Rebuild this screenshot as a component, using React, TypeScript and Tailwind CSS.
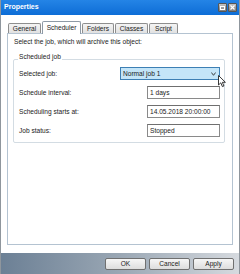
import React from "react";

const font = { fontFamily: '"Liberation Sans", Arial, sans-serif' };

function Tab({ label, w, selected }: { label: string; w: string; selected?: boolean }) {
  if (selected) {
    return (
      <div
        className={`${w} h-[13px] -mb-px relative bg-white border-t border-x border-[#8e9aa6] rounded-t-[2px] flex items-center justify-center text-[6.6px] text-[#1a1a1a]`}
      >
        <span className="-mt-px">{label}</span>
      </div>
    );
  }
  return (
    <div
      className={`${w} h-[10px] bg-gradient-to-b from-[#f4f4f4] to-[#e1e1e1] border-t border-x border-[#8e8e8e] rounded-t-[2px] flex items-center justify-center text-[6.6px] text-[#1a1a1a]`}
    >
      {label}
    </div>
  );
}

function TextBox({ value }: { value: string }) {
  return (
    <div className="w-[73px] h-[13px] border border-[#8a8a8a] border-t-[#6f6f6f] bg-white flex items-center pl-[2px] text-[6.6px] text-[#1a1a1a]">
      {value}
    </div>
  );
}

function Row({ label, children }: { label: string; children: React.ReactNode }) {
  return (
    <div className="h-[13px] flex items-center justify-between">
      <span className="text-[6.6px] text-[#1a1a1a]">{label}</span>
      {children}
    </div>
  );
}

export default function App() {
  return (
    <div
      className="w-[240px] h-[274px] flex flex-col bg-white border-x border-[#8f969d] overflow-hidden"
      style={font}
    >
      {/* Title bar */}
      <div className="h-[15px] shrink-0 bg-gradient-to-b from-[#2484e6] to-[#0c6dd6] flex items-center justify-between pl-[3px] pr-[2px]">
        <span className="text-white font-bold text-[7px]">Properties</span>
        <div className="flex gap-[1px]">
          <div className="w-[9px] h-[9px] rounded-[1px] border border-[#555] bg-gradient-to-b from-[#c4c4c4] to-[#7c7c7c] flex items-center justify-center">
            <div className="w-[5px] h-[4px] border border-white border-t-[1.5px]" />
          </div>
          <div className="w-[9px] h-[9px] rounded-[1px] border border-[#555] bg-gradient-to-b from-[#c4c4c4] to-[#7c7c7c] flex items-center justify-center">
            <svg width="5" height="5" viewBox="0 0 5 5">
              <path d="M0.5 0.5 L4.5 4.5 M4.5 0.5 L0.5 4.5" stroke="white" strokeWidth="1.2" />
            </svg>
          </div>
        </div>
      </div>

      {/* Body */}
      <div className="flex-1 flex flex-col px-[6px] pt-[6px] pb-[8px]">
        <div className="h-[12px] flex items-end pl-[1px] gap-[1px] relative z-10">
          <Tab label="General" w="w-[33px]" />
          <Tab label="Scheduler" w="w-[39px]" selected />
          <Tab label="Folders" w="w-[32px]" />
          <Tab label="Classes" w="w-[33px]" />
          <Tab label="Script" w="w-[29px]" />
        </div>
        <div className="flex-1 border border-[#b4c3d1] bg-white flex flex-col pt-[4px]">
          <div className="h-[8px] flex items-center pl-[6px] text-[6.6px] text-[#1a1a1a]">
            Select the job, which will archive this object:
          </div>
          <div className="mt-[13px] ml-[5px] mr-[7px] border border-[#d3dce3] rounded-[2px] pb-[5px] pl-[5px] pr-[4px]">
            <div className="-mt-[7px] -ml-[1px] h-[8px] w-fit bg-white px-[1px] flex items-center text-[6.6px] text-[#1a1a1a]">
              Scheduled job
            </div>
            <div className="mt-[6px] flex flex-col gap-[6px]">
              <Row label="Selected job:">
                <div className="relative w-[100px] h-[13px] border border-[#3d7fb4] bg-[#c4e5f8] flex items-center justify-between pl-[2px] pr-[3px] text-[6.6px] text-[#1a1a1a]">
                  <span>Normal job 1</span>
                  <svg width="5" height="4" viewBox="0 0 5 4">
                    <path d="M0.4 0.5 L2.5 3.3 L4.6 0.5" stroke="#333" strokeWidth="0.9" fill="none" />
                  </svg>
                  <svg
                    className="absolute left-[97px] top-[7px]"
                    width="8"
                    height="13"
                    viewBox="0 0 8 13"
                  >
                    <path
                      d="M0.5 0.5 L0.5 10 L2.8 7.8 L4.4 11.6 L5.9 11 L4.4 7.3 L7.4 7.3 Z"
                      fill="white"
                      stroke="#222"
                      strokeWidth="0.9"
                      strokeLinejoin="round"
                    />
                  </svg>
                </div>
              </Row>
              <Row label="Schedule interval:">
                <TextBox value="1 days" />
              </Row>
              <Row label="Scheduling starts at:">
                <TextBox value="14.05.2018 20:00:00" />
              </Row>
              <Row label="Job status:">
                <TextBox value="Stopped" />
              </Row>
            </div>
          </div>
        </div>
      </div>

      {/* Bottom bar */}
      <div className="h-[21px] shrink-0 bg-gradient-to-r from-[#6c8095] via-[#9aa7b4] to-[#d6dadf] flex items-center justify-end gap-[3px] pr-[5px]">
        {["OK", "Cancel", "Apply"].map((b) => (
          <div
            key={b}
            className="w-[41px] h-[12px] border border-[#707070] rounded-[2px] bg-gradient-to-b from-[#f6f6f6] to-[#dddddd] flex items-center justify-center text-[6.6px] text-[#1a1a1a]"
          >
            {b}
          </div>
        ))}
      </div>
    </div>
  );
}
